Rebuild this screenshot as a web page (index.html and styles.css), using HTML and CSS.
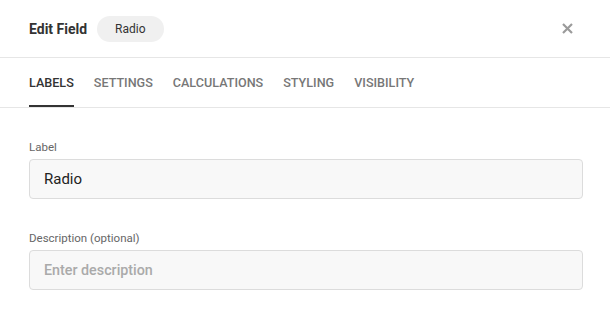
FILE: index.html
```html
<!DOCTYPE html>
<html>
<head>
<meta charset="utf-8">
<link rel="stylesheet" href="styles.css">
</head>
<body>
<div class="modal">
  <div class="header">
    <div class="title">Edit Field</div>
    <div class="pill">Radio</div>
    <div class="spacer"></div>
    <button class="close" aria-label="Close">
      <svg width="11" height="11" viewBox="0 0 11 11"><path d="M1 1 L10 10 M10 1 L1 10" stroke="#9b9b9b" stroke-width="2.2" stroke-linecap="butt"/></svg>
    </button>
  </div>
  <div class="tabs">
    <div class="tab active">Labels</div>
    <div class="tab">Settings</div>
    <div class="tab">Calculations</div>
    <div class="tab">Styling</div>
    <div class="tab">Visibility</div>
  </div>
  <div class="content">
    <div class="field">
      <label class="label">Label</label>
      <div class="input">Radio</div>
    </div>
    <div class="field">
      <label class="label">Description (optional)</label>
      <div class="input placeholder">Enter description</div>
    </div>
  </div>
</div>
</body>
</html>
```
FILE: styles.css
```css
html, body {
  margin: 0;
  padding: 0;
  background: #fff;
}
body {
  font-family: Roboto, "Noto Sans", sans-serif;
  color: #333;
  width: 610px;
  height: 315px;
  overflow: hidden;
}
.header {
  display: flex;
  align-items: center;
  height: 57px;
  padding: 0 29px;
  border-bottom: 1px solid #e6e6e6;
}
.title {
  font-size: 14px;
  font-weight: 700;
  color: #333;
}
.pill {
  margin-left: 10px;
  height: 26px;
  line-height: 26px;
  padding: 0 18px;
  border-radius: 13px;
  background: #f0f0f0;
  font-size: 12px;
  color: #333;
}
.spacer { flex: 1; }
.close {
  border: 0;
  background: none;
  padding: 0;
  margin-right: 8px;
  width: 11px;
  height: 11px;
  display: flex;
}
.tabs {
  display: flex;
  gap: 20px;
  height: 49px;
  padding: 0 29px;
  border-bottom: 1px solid #e6e6e6;
}
.tab {
  display: flex;
  align-items: center;
  font-size: 12.6px;
  font-weight: 500;
  text-transform: uppercase;
  color: #777;
  border-bottom: 2px solid transparent;
  padding-top: 2px;
}
.tab.active {
  color: #333;
  border-bottom-color: #333;
}
.content {
  padding: 32px 27px 0 29px;
}
.field + .field {
  margin-top: 32px;
}
.label {
  display: block;
  font-size: 11.5px;
  line-height: 14px;
  color: #666;
  margin-bottom: 5px;
}
.input {
  box-sizing: border-box;
  height: 40px;
  line-height: 38px;
  border: 1px solid #dcdcdc;
  border-radius: 4px;
  background: #f8f8f8;
  padding: 0 14px;
  font-size: 15px;
  color: #222;
}
.input.placeholder {
  color: #aaa;
  font-weight: 500;
  font-size: 14.3px;
}
```
